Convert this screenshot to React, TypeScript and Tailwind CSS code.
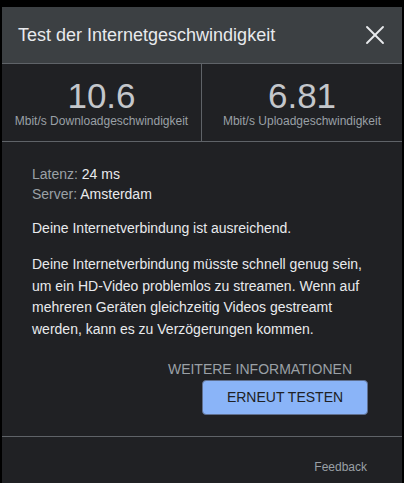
import { X } from "lucide-react"

export default function App() {
  return (
    <div className="w-[404px] h-[483px] bg-black pt-[7px] px-[2px] font-['Liberation_Sans',Arial,sans-serif] overflow-hidden">
      <div className="w-[400px] h-[476px] bg-[#202124] flex flex-col">
        {/* Header */}
        <div className="h-[57px] bg-[#3c4043] border-b border-[#5f6368] flex items-center justify-between pl-[16px] pr-[11px] shrink-0">
          <h1 className="text-[18px] text-[#e8eaed]">Test der Internetgeschwindigkeit</h1>
          <X className="w-[32px] h-[32px] text-[#e8eaed]" strokeWidth={1.4} />
        </div>

        {/* Speeds */}
        <div className="grid grid-cols-2 h-[78px] border-b border-[#5f6368] shrink-0">
          <div className="flex flex-col items-center pt-[12px] border-r border-[#5f6368]">
            <span className="text-[35px] leading-[40px] text-[#c4c7cb]">10.6</span>
            <span className="text-[12px] leading-[16px] text-[#9aa0a6] -mt-[3px]">Mbit/s Downloadgeschwindigkeit</span>
          </div>
          <div className="flex flex-col items-center pt-[12px]">
            <span className="text-[35px] leading-[40px] text-[#c4c7cb]">6.81</span>
            <span className="text-[12px] leading-[16px] text-[#9aa0a6] -mt-[3px]">Mbit/s Uploadgeschwindigkeit</span>
          </div>
        </div>

        {/* Body */}
        <div className="px-[30px] pt-[22px] text-[14px] text-[#e8eaed]">
          <p className="leading-[20px]">
            <span className="text-[#9aa0a6]">Latenz: </span>24 ms
          </p>
          <p className="leading-[20px]">
            <span className="text-[#9aa0a6]">Server: </span>Amsterdam
          </p>
          <p className="mt-[14px] leading-[20px]">Deine Internetverbindung ist ausreichend.</p>
          <p className="mt-[16px] leading-[21.7px] pr-[2px]">
            Deine Internetverbindung müsste schnell genug sein, um ein HD-Video problemlos zu streamen. Wenn auf
            mehreren Geräten gleichzeitig Videos gestreamt werden, kann es zu Verzögerungen kommen.
          </p>
        </div>

        {/* Actions */}
        <div className="flex flex-col items-end pr-[34px] mt-[18px]">
          <button className="text-[14px] leading-[20px] text-[#9aa0a6] mr-[16px]">WEITERE INFORMATIONEN</button>
          <button className="mt-[1px] w-[166px] h-[35px] rounded-[4px] bg-[#8ab4f8] border border-[#5f6f8f] text-[14px] text-[#202124]">
            ERNEUT TESTEN
          </button>
        </div>

        <div className="mt-[21px] border-t border-[#5f6368] flex justify-end pr-[35px] pt-[21px]">
          <span className="text-[12px] text-[#9aa0a6]">Feedback</span>
        </div>
      </div>
    </div>
  )
}
